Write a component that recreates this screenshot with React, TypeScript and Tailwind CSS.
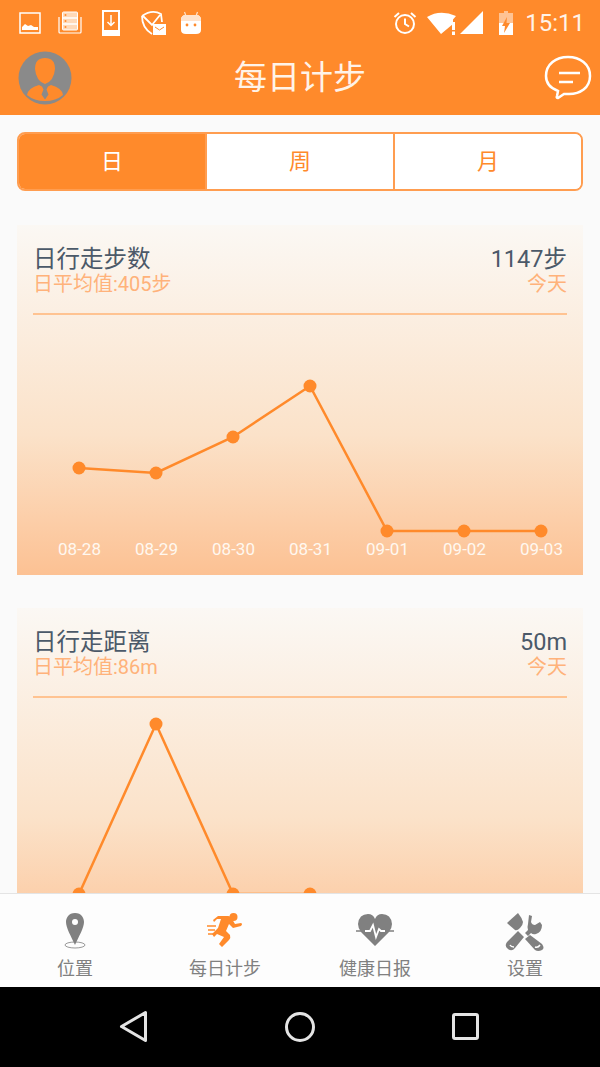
import React, { useState } from 'react'

const ORANGE = '#ff8a2b'

interface ChartData {
  title: string
  average: string
  value: string
  points: number[]
  dates: string[]
}

const xs = [62, 139, 216, 293, 370, 447, 524]
const dates = ['08-28', '08-29', '08-30', '08-31', '09-01', '09-02', '09-03']

const StatusBar: React.FC = () => (
  <div className="flex h-[46px] items-center justify-between pl-[19px] pr-[15px]">
    <div className="flex items-center gap-[17px]">
      <svg width="22" height="22" viewBox="0 0 22 22" fill="none">
        <rect x="1" y="1" width="20" height="20" stroke="#fff" strokeWidth="1.5" />
        <path d="M3 18v-3l3-3 3 2 3-1 3 2 4 0v3z" fill="#fff" />
      </svg>
      <svg width="24" height="24" viewBox="0 0 24 24" fill="none">
        <path d="M1 6v15q0 1 1 1h20q1 0 1-1V6" stroke="#fff" strokeWidth="1.2" />
        <rect x="4.500" y="1" width="15" height="18" rx="1" fill="#ffd9b8" stroke="#fff" />
        <path d="M4.500 7h15M4.500 13h15" stroke="#fff" strokeWidth="1.600" />
        <circle cx="7.500" cy="4" r="1" fill="#ff8a2b" />
        <circle cx="7.500" cy="10" r="1" fill="#ff8a2b" />
        <circle cx="7.500" cy="16" r="1" fill="#ff8a2b" />
      </svg>
      <svg width="18" height="26" viewBox="0 0 18 26" fill="none" className="ml-[3px]">
        <rect x="1" y="1" width="16" height="24" stroke="#fff" strokeWidth="2" />
        <rect x="1" y="20" width="16" height="5" fill="#fff" />
        <path d="M9 5v10M5.500 12 9 15.500 12.500 12" stroke="#fff" strokeWidth="1.500" />
      </svg>
      <svg width="26" height="26" viewBox="0 0 26 26" fill="none" className="ml-[3px]">
        <path d="M2 6Q12-1 21 4l1 8M2 6q0 12 10 18M3 6l9 9 8-10" stroke="#fff" strokeWidth="1.800" />
        <rect x="13" y="14" width="13" height="11" fill="#fff" />
        <path d="M15 17l4.500 3 4.500-3" stroke="#ff8a2b" strokeWidth="1" />
      </svg>
      <svg width="20" height="24" viewBox="0 0 20 24" fill="none" className="-ml-[2px]">
        <path d="M5 5 3.500 1M15 5l1.500-4" stroke="#ffe3cc" strokeWidth="1.200" />
        <path d="M0 9q0-5 5-5h10q5 0 5 5v10q0 4-5 4H5q-5 0-5-4z" fill="#fff" />
        <path d="M0 9q0-5 5-5h10q5 0 5 5v1H0z" fill="#ffe3cc" />
        <circle cx="6" cy="14" r="1.400" fill="#ff8a2b" />
        <circle cx="14" cy="14" r="1.400" fill="#ff8a2b" />
      </svg>
    </div>
    <div className="flex items-center">
      <svg width="24" height="24" viewBox="0 0 24 24" fill="none" className="mr-[10px]">
        <circle cx="12" cy="13" r="9" stroke="#fff" strokeWidth="2" />
        <path d="M12 7.500V13l4 2.500M1.500 6 6 2M22.500 6 18 2" stroke="#fff" strokeWidth="2" />
      </svg>
      <svg width="30" height="24" viewBox="0 0 30 24" fill="#fff" className="mr-[3px]">
        <path d="M0 6Q13-2 29 5l-3 3.500V13L14 23z" />
        <path d="M25 11h3v8h-3zM25 20.500h3V24h-3z" />
      </svg>
      <svg width="24" height="24" viewBox="0 0 24 24" fill="#fff" className="mr-[14px]">
        <path d="M0 23 23 0v23z" />
      </svg>
      <svg width="16" height="24" viewBox="0 0 16 24" className="mr-[11px]">
        <path d="M4 2h2V0h4v2h5v22H1V2z" fill="#ffc393" />
        <path d="M1 12h14v12H1z" fill="#fff" />
        <path d="M9 6 4 15h3l-1 7 6-10H8.500z" fill="#ff8a2b" />
      </svg>
      <span className="text-[24px] leading-none text-[#fff3e8]">15:11</span>
    </div>
  </div>
)

const Header: React.FC = () => (
  <div className="flex h-[69px] items-center justify-between pb-[6px] pl-[18px] pr-[8px]">
    <svg width="54" height="54" viewBox="0 0 54 54">
      <circle cx="27" cy="27" r="26.500" fill="#8a8a8a" />
      <path d="M27 7q10 0 10 11-1 12-10 15-9-3-10-15Q17 7 27 7z" fill="#ff8a2b" />
      <path d="M9 44q1-7 12-10l3 1.500 1.500 3-2 5 3.500 5 3.500-5-2-5 1.500-3 3-1.500q11 3 12 10-7 6-18 6t-18-6z" fill="#ff8a2b" />
    </svg>
    <span className="mr-[16px] text-[33px] leading-none text-[#fff3e8]">每日计步</span>
    <svg width="48" height="46" viewBox="0 0 48 46" fill="none">
      <path
        d="M24 2c12 0 22 7 22 19s-10 18-21 18c-2 0-3 0-5 0l-6 4q-2 0-1-2l1-5C6 33 2 28 2 21 2 9 12 2 24 2z"
        stroke="#fff"
        strokeWidth="2.500"
      />
      <path d="M15 18h21M15 27h14" stroke="#fff" strokeWidth="2.500" />
    </svg>
  </div>
)

const Segment: React.FC = () => {
  const [active, setActive] = useState(0)
  return (
    <div className="mx-[17px] mt-[17px] flex h-[59px] shrink-0 overflow-hidden rounded-[8px] border-2 border-[#ff9d50]">
      {['日', '周', '月'].map((label, i) => (
        <button
          key={label}
          onClick={() => setActive(i)}
          className={`flex-1 text-[22px] ${i > 0 ? 'border-l-2 border-[#ff9d50]' : ''} ${
            active === i ? 'bg-[#ff8a2b] text-white' : 'bg-white text-[#ff8a2b]'
          }`}
        >
          {label}
        </button>
      ))}
    </div>
  )
}

const ChartCard: React.FC<{ data: ChartData }> = ({ data }) => (
  <div className="mx-[17px] h-[350px] shrink-0 bg-gradient-to-b from-[#fbf8f4] via-[#fbe2c9] via-60% to-[#fcc193]">
    <div className="flex justify-between px-[16px] pt-[20px]">
      <div className="text-[23.500px] leading-[28px] text-[#4b5969]">{data.title}</div>
      <div className="text-[23.500px] leading-[28px] text-[#4b5969]">{data.value}</div>
    </div>
    <div className="flex justify-between px-[16px]">
      <div className="text-[20px] leading-[22px] text-[#ffb27a]">{data.average}</div>
      <div className="text-[20px] leading-[22px] text-[#ffb27a]">今天</div>
    </div>
    <div className="mx-[16px] mt-[18px] h-[1.500px] bg-[#ffc391]" />
    <svg width="566" height="217" viewBox="0 0 566 217" className="block overflow-visible">
      <polyline
        points={data.points.map((y, i) => `${xs[i]},${y}`).join(' ')}
        fill="none"
        stroke={ORANGE}
        strokeWidth="2.500"
      />
      {data.points.map((y, i) => (
        <circle key={i} cx={xs[i]} cy={y} r="6.500" fill={ORANGE} />
      ))}
    </svg>
    <div className="flex pl-[24px] pt-[7px]">
      {data.dates.map((d) => (
        <div key={d} className="w-[77px] text-center text-[17px] leading-[20px] text-[#fff8f0]">
          {d}
        </div>
      ))}
    </div>
  </div>
)

const tabs = [
  {
    label: '位置',
    icon: (
      <svg width="40" height="40" viewBox="0 0 40 40" fill="none">
        <ellipse cx="20" cy="33" rx="10" ry="3" stroke="#999" strokeWidth="1" />
        <path
          d="M20 1c6.500 0 9 5 9 9 0 6-5 14-9 23-4-9-9-17-9-23 0-4 2.500-9 9-9z"
          fill="#808080"
        />
        <circle cx="20" cy="10" r="3" fill="#fff" />
      </svg>
    ),
  },
  {
    label: '每日计步',
    icon: (
      <svg width="40" height="40" viewBox="0 0 40 40" fill="none">
        <circle cx="28.500" cy="5" r="4" fill={ORANGE} />
        <path
          d="M8 8 13 4h10q3 0 4 3l3 5 6-1q2 1 0 3l-8 2-4-4-3 7 4 4q1 3-1 5l-7 7-3-3 5-7-7-3-3 3-2-3 6-6 3-9h-4l-3 3z"
          fill={ORANGE}
        />
        <path d="M2 14h9M3 18h7M3 22h7" stroke={ORANGE} strokeWidth="1.500" />
      </svg>
    ),
  },
  {
    label: '健康日报',
    icon: (
      <svg width="40" height="40" viewBox="0 0 40 40" fill="none">
        <path d="M20 34 6 20Q3 16 3 12 4 2 13 2q5 0 7 5 2-5 7-5 9 0 10 10 0 4-3 8z" fill="#808080" />
        <path d="M10 19h5l3-6 3 12 3-8 2 2h4" stroke="#fff" strokeWidth="1.800" />
        <path d="M1 19h5M34 19h5" stroke="#808080" strokeWidth="1.500" />
      </svg>
    ),
  },
  {
    label: '设置',
    icon: (
      <svg width="40" height="40" viewBox="0 0 40 40" fill="#808080">
        <path d="M2 11 13 1q4 5 5 9 0 3-3 6t-5 2z" />
        <path d="M24 3l3 1-1 6q1 3 4 3l5-3 2 3q0 7-6 9-3 1-5-1l-3 3-3-3 3-3q-1-3 0-6z" />
        <path d="M13 19l6 6-9 11q-3 4-7 1-4-3-1-7z" />
        <path d="M25 23l12 9q3 4 0 6-4 2-7 0L20 27z" />
        <path d="M5 33q1 2 4 2M30 35q3 1 5-2" stroke="#fff" strokeWidth="1.500" fill="none" />
      </svg>
    ),
  },
]

const TabBar: React.FC = () => (
  <div className="z-10 flex h-[94px] shrink-0 border-t border-[#e4e4e4] bg-[#fdfdfd]">
    {tabs.map((tab) => (
      <div key={tab.label} className="flex flex-1 flex-col items-center pt-[18px]">
        {tab.icon}
        <span className="mt-[6px] text-[18px] leading-[22px] text-[#808080]">{tab.label}</span>
      </div>
    ))}
  </div>
)

const NavBar: React.FC = () => (
  <div className="flex h-[80px] shrink-0 items-center justify-center gap-[132px] bg-black">
    <svg width="34" height="36" viewBox="0 0 34 36" fill="none">
      <path d="M28.500 3.500v28L4.500 17.500z" stroke="#e4e4e4" strokeWidth="3" strokeLinejoin="round" />
    </svg>
    <svg width="34" height="34" viewBox="0 0 34 34" fill="none">
      <circle cx="17" cy="17" r="13.500" stroke="#e4e4e4" strokeWidth="3" />
    </svg>
    <svg width="34" height="34" viewBox="0 0 34 34" fill="none">
      <rect x="4.500" y="4.500" width="24" height="24" rx="1.500" stroke="#e4e4e4" strokeWidth="3" />
    </svg>
  </div>
)

const cards: ChartData[] = [
  {
    title: '日行走步数',
    average: '日平均值:405步',
    value: '1147步',
    points: [153, 158, 122, 71, 216, 216, 216],
    dates,
  },
  {
    // 第二张卡片的日期在底部标签栏下面,看不到
    title: '日行走距离',
    average: '日平均值:86m',
    value: '50m',
    points: [196, 26, 196, 196, 300, 300, 300],
    dates: [],
  },
]

export default function App() {
  return (
    <div
      className="flex h-[1067px] w-[600px] flex-col overflow-hidden bg-[#fafafa]"
      style={{ fontFamily: 'Roboto, "Noto Sans CJK SC", sans-serif' }}
    >
      <div className="h-[115px] shrink-0 bg-[#ff8a2b]">
        <StatusBar />
        <Header />
      </div>
      <div className="flex min-h-0 flex-1 flex-col overflow-hidden">
        <Segment />
        <div className="mt-[34px] flex flex-col gap-[33px]">
          {cards.map((c) => (
            <ChartCard key={c.title} data={c} />
          ))}
        </div>
      </div>
      <TabBar />
      <NavBar />
    </div>
  )
}
